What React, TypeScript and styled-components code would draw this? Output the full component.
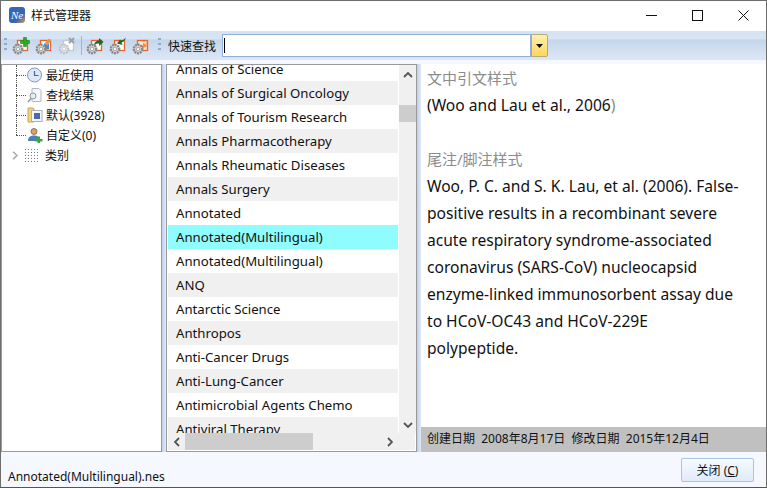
import { createGlobalStyle, styled } from "styled-components";

const FONT = `"Noto Sans", "Noto Sans CJK SC", sans-serif`;

const GlobalStyle = createGlobalStyle`
  html, body { margin: 0; padding: 0; }
  body { font-family: ${FONT}; color: #111; overflow: hidden; }
`;

const styles = [
  "Annals of Science",
  "Annals of Surgical Oncology",
  "Annals of Tourism Research",
  "Annals Pharmacotherapy",
  "Annals Rheumatic Diseases",
  "Annals Surgery",
  "Annotated",
  "Annotated(Multilingual)",
  "Annotated(Multilingual)",
  "ANQ",
  "Antarctic Science",
  "Anthropos",
  "Anti-Cancer Drugs",
  "Anti-Lung-Cancer",
  "Antimicrobial Agents Chemo",
  "Antiviral Therapy",
];

function Gear({ faded }: { faded?: boolean }) {
  const c = faded ? "#c0c4c9" : "#8a8a8a";
  return (
    <g>
      <circle cx="6" cy="12" r="4.200" fill={faded ? "#e2e6ec" : "#dcdcdc"} stroke={c} strokeWidth="2.400" strokeDasharray="2 0.700" />
      <circle cx="6" cy="12" r="1.800" fill="#f4f4f4" stroke={c} strokeWidth="0.700" />
    </g>
  );
}

function ToolIcon({ kind }: { kind: string }) {
  const faded = kind === "delete";
  return (
    <svg width="18" height="18" viewBox="0 0 18 18">
      <rect
        x="5.500"
        y="3.500"
        width="10"
        height="10"
        fill={kind === "merge" ? "#fbe3d0" : "#fff"}
        stroke={faded ? "#c4c8cc" : "#e8642a"}
        strokeWidth="1.300"
      />
      {kind === "edit" && <rect x="9" y="6.500" width="5" height="6" fill="#3f8fd8" />}
      {kind === "edit" && <path d="M9.500 6.500l4.500-5 2.500 2-4.500 5z" fill="#e09a50" />}
      {kind === "add" && <path d="M11.500 0.500h3v3h3v3h-3v3h-3v-3h-3v-3h3z" fill="#22b022" stroke="#0f7a0f" strokeWidth="0.500" />}
      {kind === "delete" && <path d="M11 1l5 5M16 1l-5 5" stroke="#9aa0a6" strokeWidth="2" />}
      {kind === "export" && <path d="M8 9c0-4 3-5.500 5-5.500V1l4.500 4L13 9V6.500c-2 0-4 .5-5 2.500z" fill="#1f6a2a" />}
      {kind === "import" && <path d="M17 .5c-1 3-2.500 4.500-4.500 5l1 2.500-5.500-1.500 3-4 1 1c2 0 3.500-1.500 5-3z" fill="#1f6a2a" />}
      {kind === "merge" && <path d="M7.500 8.500h3.500V6l3 1.500V5h-3V4l3.500 1v5l-3 .5V12H9v-1.500H7.500z" fill="#f08a45" />}
      <Gear faded={faded} />
    </svg>
  );
}

export default function App() {
  return (
    <Frame>
      <GlobalStyle />
      <TitleBar>
        <AppLogo>Ne</AppLogo>
        <TitleText>样式管理器</TitleText>
        <WinButtons>
          <WinButton>
            <svg width="11" height="11" viewBox="0 0 11 11"><path d="M0 5.500h11" stroke="#111" /></svg>
          </WinButton>
          <WinButton>
            <svg width="11" height="11" viewBox="0 0 11 11"><rect x="0.500" y="0.500" width="10" height="10" fill="none" stroke="#111" /></svg>
          </WinButton>
          <WinButton>
            <svg width="11" height="11" viewBox="0 0 11 11"><path d="M0.500 0.500l10 10M10.500 0.500l-10 10" stroke="#111" /></svg>
          </WinButton>
        </WinButtons>
      </TitleBar>

      <Toolbar>
        <Grip />
        <ToolIcon kind="add" />
        <ToolIcon kind="edit" />
        <ToolIcon kind="delete" />
        <ToolSep />
        <ToolIcon kind="export" />
        <ToolIcon kind="import" />
        <ToolIcon kind="merge" />
        <Grip $offset={3} />
        <SearchLabel>快速查找</SearchLabel>
        <SearchBox>
          <Caret />
        </SearchBox>
        <SearchDrop>
          <svg width="7" height="4" viewBox="0 0 7 4"><path d="M0 0h7L3.500 4z" fill="#111" /></svg>
        </SearchDrop>
      </Toolbar>

      <Body>
        <TreePane>
          <TreeRow>
            <svg width="16" height="16" viewBox="0 0 16 16">
              <circle cx="7.500" cy="8" r="7" fill="#dfe6f5" stroke="#8b95b5" />
              <path d="M7.500 4v4.500h4" fill="none" stroke="#4a62a8" strokeWidth="1.200" />
            </svg>
            <TreeText>最近使用</TreeText>
          </TreeRow>
          <TreeRow>
            <svg width="16" height="16" viewBox="0 0 16 16">
              <path d="M5 1.500h7l2 2v11H5z" fill="#f6f8fb" stroke="#b0b8c4" />
              <circle cx="6" cy="9" r="3" fill="#e4edf5" stroke="#8a97a5" />
              <path d="M4 11.500L1 15" stroke="#8a97a5" strokeWidth="1.500" />
            </svg>
            <TreeText>查找结果</TreeText>
          </TreeRow>
          <TreeRow>
            <svg width="16" height="16" viewBox="0 0 16 16">
              <path d="M1 1h5l1 1v13H1z" fill="#f3d47e" stroke="#c9a54c" />
              <rect x="4.500" y="3.500" width="10.500" height="11" fill="#f3f5f8" stroke="#a9b0bb" />
              <rect x="7" y="6" width="6" height="6" fill="#4a68b0" />
            </svg>
            <TreeText>默认(3928)</TreeText>
          </TreeRow>
          <TreeRow $last>
            <svg width="16" height="16" viewBox="0 0 16 16">
              <circle cx="7" cy="4.500" r="3" fill="#d99f6c" stroke="#7a4a2a" strokeWidth="0.700" />
              <path d="M1 14c0-4 2.500-5.500 6-5.500s5 1 5 5.500z" fill="#4c7fb8" />
              <path d="M10.500 9.500h2.500V12h2.500v2.500H13V16h-2.500v-1.500H8V12h2.500z" fill="#35a835" />
            </svg>
            <TreeText>自定义(0)</TreeText>
          </TreeRow>
          <CategoryRow>
            <svg width="7" height="9" viewBox="0 0 7 9"><path d="M1 .7l4 3.800-4 3.800" fill="none" stroke="#a6a6a6" strokeWidth="1.500" /></svg>
            <DotGrid />
            <TreeText>类别</TreeText>
          </CategoryRow>
        </TreePane>

        <Splitter />

        <ListPane>
          <ListMain>
            <ListClip>
              <ListScroll>
                {styles.map((name, i) => (
                  <ListRow key={i} $odd={i % 2 === 1} $selected={i === 7}>
                    {name}
                  </ListRow>
                ))}
              </ListScroll>
            </ListClip>
            <VScroll>
              <UpArrow>
                <svg width="10" height="6" viewBox="0 0 10 6"><path d="M1 5l4-4 4 4" fill="none" stroke="#555" strokeWidth="1.800" /></svg>
              </UpArrow>
              <VTrack>
                <VThumb />
              </VTrack>
              <ScrollArrow>
                <svg width="10" height="6" viewBox="0 0 10 6"><path d="M1 1l4 4 4-4" fill="none" stroke="#555" strokeWidth="1.800" /></svg>
              </ScrollArrow>
            </VScroll>
          </ListMain>
          <HScroll>
            <HArrow>
              <svg width="6" height="10" viewBox="0 0 6 10"><path d="M5 1L1 5l4 4" fill="none" stroke="#555" strokeWidth="1.800" /></svg>
            </HArrow>
            <HTrack>
              <HThumb />
            </HTrack>
            <HArrow>
              <svg width="6" height="10" viewBox="0 0 6 10"><path d="M1 1l4 4-4 4" fill="none" stroke="#555" strokeWidth="1.800" /></svg>
            </HArrow>
          </HScroll>
        </ListPane>

        <Splitter />

        <PreviewPane>
          <PreviewBody>
            <PreviewHeading>文中引文样式</PreviewHeading>
            <PreviewText>(Woo and Lau et al., 2006<Faint>)</Faint></PreviewText>
            <SecondHeading>尾注/脚注样式</SecondHeading>
            <PreviewText>
              Woo, P. C. and S. K. Lau, et al. (2006). False-
              <br />positive results in a recombinant severe
              <br />acute respiratory syndrome-associated
              <br />coronavirus (SARS-CoV) nucleocapsid
              <br />enzyme-linked immunosorbent assay due
              <br />to HCoV-OC43 and HCoV-229E
              <br />polypeptide.
            </PreviewText>
          </PreviewBody>
          <DateBar>创建日期&nbsp; 2008年8月17日&nbsp; 修改日期&nbsp; 2015年12月4日</DateBar>
        </PreviewPane>
      </Body>

      <StatusBar>
        <FileName>Annotated(Multilingual).nes</FileName>
        <CloseButton type="button">关闭 (<u>C</u>)</CloseButton>
      </StatusBar>
    </Frame>
  );
}

const Frame = styled.div`
  width: 767px;
  height: 488px;
  box-sizing: border-box;
  border: 1px solid #6d6d6d;
  border-bottom-color: #555;
  background: #f5f8fe;
  display: flex;
  flex-direction: column;
  overflow: hidden;
`;

const TitleBar = styled.div`
  height: 30px;
  flex: none;
  box-sizing: border-box;
  padding: 0 0 2px 8px;
  background: #fff;
  display: flex;
  align-items: center;
`;

const AppLogo = styled.div`
  width: 16px;
  height: 16px;
  border-radius: 3px;
  background: linear-gradient(135deg, #3566b8 65%, #d99a4e);
  color: #fff;
  font: italic 400 11px "Liberation Serif", serif;
  line-height: 16px;
  text-align: center;
`;

const TitleText = styled.div`
  margin-left: 6px;
  font-size: 12px;
`;

const WinButtons = styled.div`
  margin-left: auto;
  display: flex;
  height: 28px;
`;

const WinButton = styled.div`
  width: 46px;
  display: flex;
  align-items: center;
  justify-content: center;
`;

const Toolbar = styled.div`
  height: 29px;
  flex: none;
  box-sizing: border-box;
  padding-left: 3px;
  background: linear-gradient(#d5e2f2 0, #d9e5f4 28%, #c5d6ea 30%, #dce8f6 100%);
  display: flex;
  align-items: center;
  gap: 5px;
`;

const Grip = styled.div<{ $offset?: number }>`
  width: 3px;
  height: 15px;
  margin-left: ${(p) => p.$offset ?? 0}px;
  background: repeating-linear-gradient(#8fa9cf 0 2px, transparent 2px 5px);
`;

const ToolSep = styled.div`
  width: 1px;
  height: 19px;
  margin-right: -1px;
  background: #9db6d8;
`;

const SearchLabel = styled.div`
  font-size: 12px;
  margin-left: 2px;
  white-space: nowrap;
`;

const SearchBox = styled.div`
  width: 309px;
  height: 23px;
  box-sizing: border-box;
  margin-left: 1px;
  background: #fff;
  border: 1px solid #8fb0dc;
  padding: 3px 0 3px 1px;
`;

const Caret = styled.div`
  width: 1px;
  height: 15px;
  background: #000;
`;

const SearchDrop = styled.div`
  width: 17px;
  height: 23px;
  box-sizing: border-box;
  margin-left: -5px;
  border: 1px solid #b9a878;
  border-radius: 0 2px 2px 0;
  background: linear-gradient(#fdf0b0, #ffd65e);
  display: flex;
  align-items: center;
  justify-content: center;
`;

const Body = styled.div`
  flex: 1;
  min-height: 0;
  margin-top: 4px;
  display: flex;
`;

const TreePane = styled.div`
  width: 161px;
  flex: none;
  box-sizing: border-box;
  background: #fff;
  border: 1px solid #9a9a9a;
`;

const TreeRow = styled.div<{ $last?: boolean }>`
  position: relative;
  height: 20px;
  box-sizing: border-box;
  padding-left: 25px;
  display: flex;
  align-items: center;
  &::before {
    content: "";
    position: absolute;
    left: 14px;
    top: 0;
    height: ${(p) => (p.$last ? "10px" : "20px")};
    border-left: 1px dotted #555;
  }
  &::after {
    content: "";
    position: absolute;
    left: 14px;
    top: 10px;
    width: 10px;
    border-top: 1px dotted #555;
  }
`;

const TreeText = styled.span`
  margin-left: 3px;
  font-size: 12px;
  white-space: nowrap;
`;

const CategoryRow = styled.div`
  height: 20px;
  padding-left: 10px;
  display: flex;
  align-items: center;
  gap: 5px;
`;

const DotGrid = styled.div`
  width: 16px;
  height: 14px;
  margin-right: -3px;
  background-image: radial-gradient(circle, #777 0.6px, transparent 0.8px);
  background-size: 3px 3px;
`;

const Splitter = styled.div`
  width: 4px;
  flex: none;
  background: linear-gradient(90deg, #bcd0ea, #e1eaf6);
`;

const ListPane = styled.div`
  width: 251px;
  flex: none;
  box-sizing: border-box;
  padding: 0 1px 1px;
  background: #fff;
  border: 1px solid #9a9a9a;
  display: flex;
  flex-direction: column;
`;

const ListMain = styled.div`
  flex: 1;
  min-height: 0;
  display: flex;
`;

const ListClip = styled.div`
  width: 230px;
  flex: none;
  overflow: hidden;
  background: #fff;
`;

const ListScroll = styled.div`
  margin-top: -8px;
`;

const ListRow = styled.div<{ $odd: boolean; $selected: boolean }>`
  height: 24px;
  line-height: 24px;
  padding-left: 8px;
  font-size: 13.200px;
  white-space: nowrap;
  background: ${(p) => (p.$selected ? "#8ffcff" : p.$odd ? "#f0f0f0" : "#fff")};
`;

const VScroll = styled.div`
  width: 17px;
  flex: none;
  margin-left: 1px;
  background: #f0f0f0;
  display: flex;
  flex-direction: column;
`;

const ScrollArrow = styled.div`
  height: 17px;
  flex: none;
  display: flex;
  align-items: center;
  justify-content: center;
`;

const UpArrow = styled(ScrollArrow)`
  height: 20px;
`;

const VTrack = styled.div`
  flex: 1;
  padding-top: 20px;
`;

const VThumb = styled.div`
  height: 17px;
  background: #cdcdcd;
`;

const HScroll = styled.div`
  height: 17px;
  flex: none;
  display: flex;
  background: #f0f0f0;
`;

const HArrow = styled.div`
  width: 17px;
  flex: none;
  display: flex;
  align-items: center;
  justify-content: center;
`;

const HTrack = styled.div`
  width: 196px;
  flex: none;
`;

const HThumb = styled.div`
  width: 128px;
  height: 17px;
  background: #cdcdcd;
`;

const PreviewPane = styled.div`
  flex: 1;
  min-width: 0;
  background: #fff;
  display: flex;
  flex-direction: column;
`;

const PreviewBody = styled.div`
  flex: 1;
  padding: 1px 0 0 6px;
  min-height: 0;
`;

const PreviewHeading = styled.div`
  height: 27px;
  line-height: 27px;
  font-size: 15px;
  color: #8c8c8c;
`;

const SecondHeading = styled(PreviewHeading)`
  margin-top: 27px;
`;

const PreviewText = styled.div`
  font-size: 15.600px;
  line-height: 27px;
  white-space: nowrap;
  color: #111;
`;

const Faint = styled.span`
  color: #888;
`;

const DateBar = styled.div`
  height: 25px;
  flex: none;
  box-sizing: border-box;
  background: #c0c0c0;
  padding-left: 6px;
  font-size: 12px;
  line-height: 23px;
  white-space: nowrap;
`;

const StatusBar = styled.div`
  height: 35px;
  flex: none;
  display: flex;
  align-items: center;
  padding: 0 12px 0 7px;
  background: #f5f8fe;
`;

const FileName = styled.div`
  font-size: 12px;
  padding-top: 14px;
`;

const CloseButton = styled.button`
  margin-left: auto;
  width: 73px;
  height: 24px;
  box-sizing: border-box;
  border: 1px solid #a9c4e6;
  border-radius: 2px;
  background: linear-gradient(#f8fbff, #dfeafa);
  font-family: ${FONT};
  font-size: 12px;
  color: #111;
  padding: 0;
`;
